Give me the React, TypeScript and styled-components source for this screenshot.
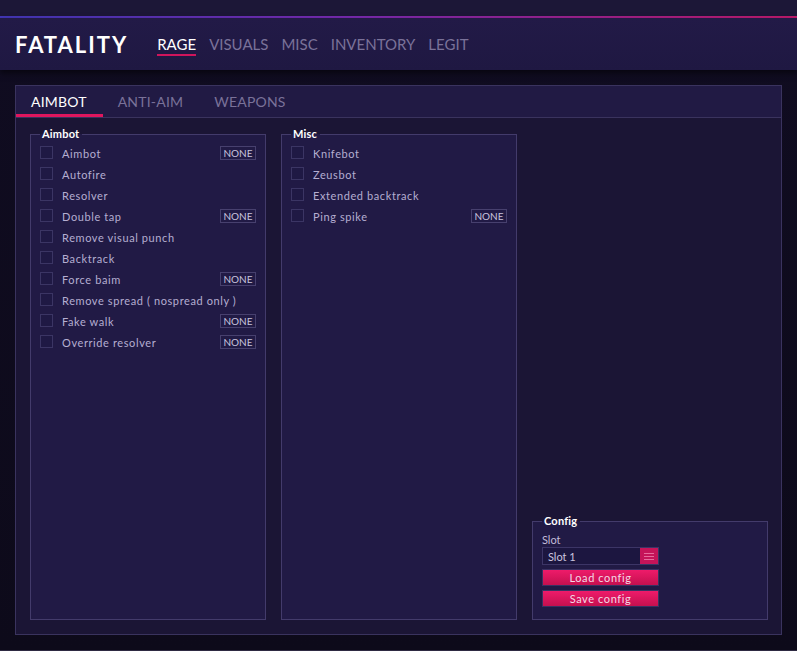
import React, { FC } from "react";
import styled, { createGlobalStyle } from "styled-components";

const GlobalStyle = createGlobalStyle`
  html, body {
    margin: 0;
    padding: 0;
    background: #0f0b1e;
    font-family: "Lato", "Noto Sans", sans-serif;
  }
  * { box-sizing: border-box; }
`;

type Option = {
  label: string;
  hotkey?: boolean;
};

const aimbotOptions: Option[] = [
  { label: "Aimbot", hotkey: true },
  { label: "Autofire" },
  { label: "Resolver" },
  { label: "Double tap", hotkey: true },
  { label: "Remove visual punch" },
  { label: "Backtrack" },
  { label: "Force baim", hotkey: true },
  { label: "Remove spread ( nospread only )" },
  { label: "Fake walk", hotkey: true },
  { label: "Override resolver", hotkey: true },
];

const miscOptions: Option[] = [
  { label: "Knifebot" },
  { label: "Zeusbot" },
  { label: "Extended backtrack" },
  { label: "Ping spike", hotkey: true },
];

const Page = styled.div`
  height: 651px;
  display: flex;
  flex-direction: column;
  background: linear-gradient(180deg, #100c21 0%, #0d0a1a 100%);
  border-bottom: 1px solid #2e2a42;
`;

const TopStrip = styled.div`
  height: 16px;
  background: #1c1737;
`;

const AccentLine = styled.div`
  height: 2px;
  background: linear-gradient(90deg, #4337b9 0%, #7a2ab0 45%, #c01a6c 100%);
`;

const Header = styled.header`
  height: 53px;
  display: flex;
  align-items: center;
  padding-left: 15px;
  background: linear-gradient(180deg, #221a47 0%, #1f1842 100%);
  box-shadow: 0 3px 6px rgba(0, 0, 0, 0.55);
  position: relative;
  z-index: 1;
`;

const Logo = styled.div`
  font-size: 22px;
  font-weight: 700;
  letter-spacing: 2px;
  color: #ffffff;
  margin-right: 29px;
  padding-top: 2px;
`;

const Nav = styled.nav`
  display: flex;
  gap: 13px;
  padding-top: 3px;
`;

const NavItem = styled.span<{ $active?: boolean }>`
  font-size: 15px;
  color: ${({ $active }) => ($active ? "#ffffff" : "#7a7299")};
  padding-bottom: 1px;
  border-bottom: 2px solid ${({ $active }) => ($active ? "#d0155c" : "transparent")};
  line-height: 18px;
`;

const Main = styled.main`
  flex: 1;
  padding: 15px 15px 15px;
`;

const Panel = styled.section`
  height: 550px;
  display: flex;
  flex-direction: column;
  border: 1px solid #3a335e;
  background: #1b1535;
`;

const TabBar = styled.div`
  height: 32px;
  display: flex;
  background: #211a44;
  border-bottom: 1px solid #3a335e;
`;

const Tab = styled.div<{ $active?: boolean }>`
  display: flex;
  align-items: center;
  padding: 2px 16px 0 15px;
  font-size: 14px;
  letter-spacing: 0.2px;
  color: ${({ $active }) => ($active ? "#ffffff" : "#7a7299")};
  border-bottom: 3px solid ${({ $active }) => ($active ? "#e0165e" : "transparent")};
`;

const Content = styled.div`
  flex: 1;
  display: grid;
  grid-template-columns: repeat(3, 236px);
  gap: 15px;
  padding: 10px 14px 14px;
`;

const Column = styled.div`
  display: flex;
  flex-direction: column;
  justify-content: flex-end;
`;

const Group = styled.fieldset<{ $fill?: boolean }>`
  margin: 0;
  min-width: 0;
  padding: 2px 9px 0;
  border: 1px solid #433b6b;
  background: #211a45;
  ${({ $fill }) => ($fill ? "flex: 1;" : "")}
`;

const Legend = styled.legend`
  padding: 0 3px 0 2px;
  margin-left: 0;
  font-size: 11px;
  line-height: 12px;
  font-weight: 700;
  color: #ffffff;
  letter-spacing: 0.2px;
`;

const RowList = styled.div`
  display: flex;
  flex-direction: column;
`;

const Row = styled.div`
  height: 21px;
  display: flex;
  align-items: center;
`;

const Checkbox = styled.span`
  width: 13px;
  height: 13px;
  margin-right: 9px;
  border: 1px solid #3b3564;
  background: #1f1944;
  flex-shrink: 0;
`;

const Label = styled.span`
  font-size: 11px;
  color: #b5aed1;
  letter-spacing: 0.6px;
  padding-top: 1px;
`;

const Hotkey = styled.span`
  margin-left: auto;
  height: 14px;
  width: 36px;
  display: flex;
  align-items: center;
  justify-content: center;
  font-size: 10px;
  color: #c9c3de;
  border: 1px solid #47406e;
  padding-top: 1px;
`;

const ConfigBody = styled.div`
  height: 90px;
  display: flex;
  flex-direction: column;
`;

const SmallLabel = styled.span`
  font-size: 11px;
  color: #c2bcd7;
  margin-top: 5px;
  height: 12px;
  line-height: 12px;
`;

const Select = styled.div`
  margin-top: 1px;
  width: 117px;
  height: 18px;
  display: flex;
  align-items: stretch;
  border: 1px solid #3c3566;
  background: #1c1640;
`;

const SelectValue = styled.span`
  flex: 1;
  display: flex;
  align-items: center;
  padding-left: 5px;
  font-size: 11px;
  color: #cbc5df;
`;

const SelectButton = styled.span`
  width: 18px;
  display: flex;
  align-items: center;
  justify-content: center;
  background: #c51459;
`;

const ActionButton = styled.button`
  margin-top: 4px;
  width: 117px;
  height: 17px;
  padding: 0;
  border: 1px solid #3a3162;
  background: linear-gradient(180deg, #ee1b6a 0%, #c5104f 100%);
  color: #f4d9e6;
  font-family: inherit;
  font-size: 11px;
  letter-spacing: 0.6px;
  line-height: 14px;
`;

const OptionGroup: FC<{ title: string; options: Option[] }> = ({ title, options }) => (
  <Group $fill>
    <Legend>{title}</Legend>
    <RowList>
      {options.map((o) => (
        <Row key={o.label}>
          <Checkbox />
          <Label>{o.label}</Label>
          {o.hotkey && <Hotkey>NONE</Hotkey>}
        </Row>
      ))}
    </RowList>
  </Group>
);

const App: FC = () => {
  return (
    <Page>
      <GlobalStyle />
      <TopStrip />
      <AccentLine />
      <Header>
        <Logo>FATALITY</Logo>
        <Nav>
          <NavItem $active>RAGE</NavItem>
          <NavItem>VISUALS</NavItem>
          <NavItem>MISC</NavItem>
          <NavItem>INVENTORY</NavItem>
          <NavItem>LEGIT</NavItem>
        </Nav>
      </Header>
      <Main>
        <Panel>
          <TabBar>
            <Tab $active>AIMBOT</Tab>
            <Tab>ANTI-AIM</Tab>
            <Tab>WEAPONS</Tab>
          </TabBar>
          <Content>
            <Column>
              <OptionGroup title="Aimbot" options={aimbotOptions} />
            </Column>
            <Column>
              <OptionGroup title="Misc" options={miscOptions} />
            </Column>
            <Column>
              <Group>
                <Legend>Config</Legend>
                <ConfigBody>
                  <SmallLabel>Slot</SmallLabel>
                  <Select>
                    <SelectValue>Slot 1</SelectValue>
                    <SelectButton>
                      <svg width="10" height="7" viewBox="0 0 10 7">
                        <g fill="#e86a9c">
                          <rect x="0" y="0" width="10" height="1" />
                          <rect x="0" y="3" width="10" height="1" />
                          <rect x="0" y="6" width="10" height="1" />
                        </g>
                      </svg>
                    </SelectButton>
                  </Select>
                  <ActionButton>Load config</ActionButton>
                  <ActionButton>Save config</ActionButton>
                </ConfigBody>
              </Group>
            </Column>
          </Content>
        </Panel>
      </Main>
    </Page>
  );
};

export default App;
